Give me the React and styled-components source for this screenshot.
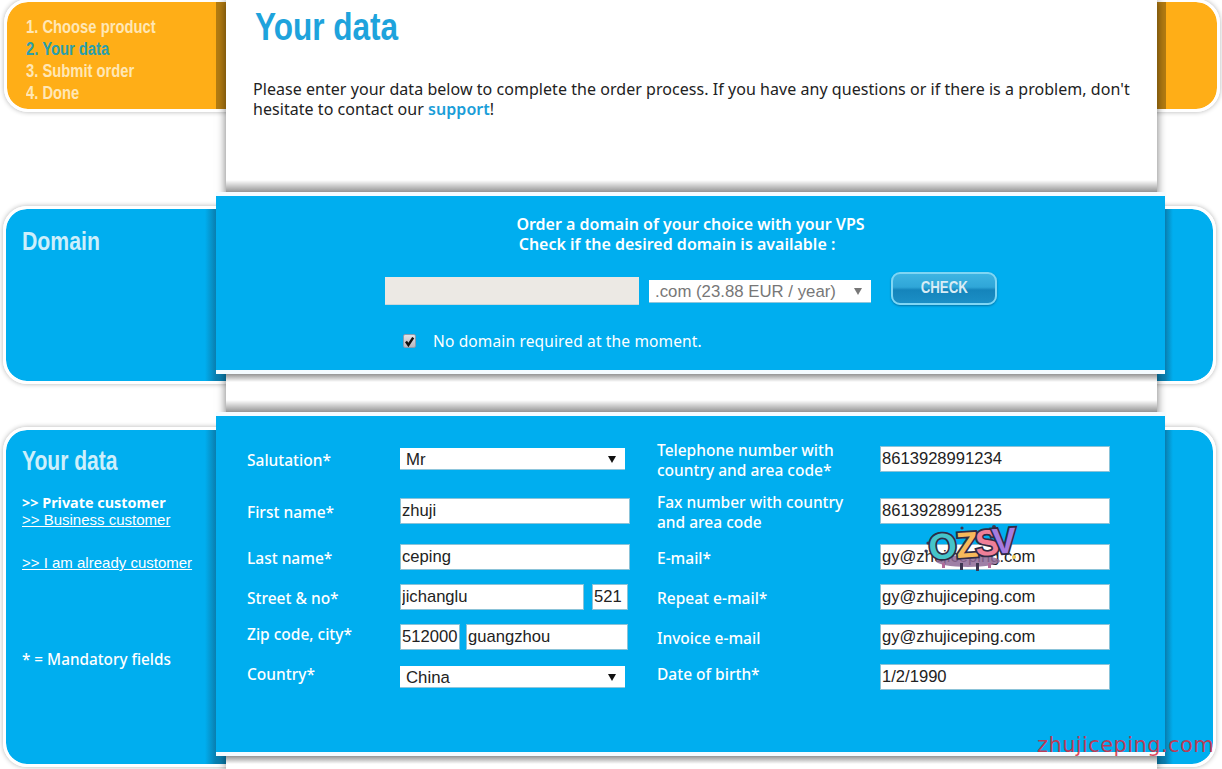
import React from "react";
import styled, { createGlobalStyle } from "styled-components";

const BLUE = "#00aeef";
const ORANGE = "#ffae17";
const BODY_FONT = '"Noto Sans", "Open Sans", sans-serif';
const ARIAL = '"Liberation Sans", Arial, sans-serif';

const GlobalStyle = createGlobalStyle`
  html, body {
    margin: 0;
    padding: 0;
    background: #fff;
    overflow: hidden;
  }
`;

//page grid: left tab, fold, white column, fold, right tab
const Page = styled.div`
  position: relative;
  width: 1222px;
  height: 769px;
  overflow: hidden;
  display: grid;
  grid-template-columns: 216px 10px 931px 8px 57px;
  grid-template-rows: 192px 220px 357px;
  font-family: ${BODY_FONT};
`;

const Band = styled.div`
  grid-column: 1 / -1;
  grid-row: ${(p) => p.$row};
  z-index: 1;
  align-self: start;
  box-sizing: border-box;
  height: ${(p) => p.$height}px;
  margin: ${(p) => p.$top}px ${(p) => 1222 - p.$right - 3}px 0 ${(p) => p.$left - 3}px;
  padding: ${(p) => p.$padTop}px 0 0 ${(p) => 22 - p.$left}px;
  border: 3px solid #fff;
  border-radius: 24px;
  box-shadow: 0 0 5px rgba(0, 0, 0, 0.3);
  background: linear-gradient(
    to right,
    ${BLUE} 0,
    ${BLUE} 199px,
    #0a7fb0 210px,
    #0a7fb0 1159px,
    ${BLUE} 1167px
  );
  background-clip: padding-box;
`;

const OrangeBand = styled(Band)`
  background: linear-gradient(
    to right,
    ${ORANGE} 0,
    ${ORANGE} 209px,
    #b37c12 209px,
    #b37c12 1159px,
    ${ORANGE} 1159px
  );
  background-clip: padding-box;
`;

const Condensed = styled.span`
  display: block;
  width: max-content;
  font-family: ${ARIAL};
  font-weight: 700;
  font-size: ${(p) => p.$size}px;
  line-height: ${(p) => p.$line}px;
  color: ${(p) => p.$color};
  transform: scaleX(${(p) => p.$sx});
  transform-origin: left center;
`;

const StepItem = styled(Condensed)`
  margin-left: 4px;
`;

const PageTitle = styled(Condensed)`
  margin: 0 0 0 2px;
`;

const ButtonText = styled(Condensed)`
  transform-origin: center;
`;

const Column = styled.div`
  grid-column: 3;
  grid-row: 1 / -1;
  z-index: 2;
  background: #fff;
  box-shadow: 0 0 9px rgba(0, 0, 0, 0.55);
  padding: 6px 27px 0 27px;
`;

const Intro = styled.p`
  margin: 31px 0 0;
  font-size: 16px;
  line-height: 20px;
  color: #222;
  letter-spacing: 0.045px;
`;

const SupportLink = styled.a`
  color: #1b9ed8;
  font-weight: 600;
`;

const Panel = styled.section`
  position: relative;
  grid-column: 1 / -1;
  grid-row: ${(p) => p.$row};
  z-index: 3;
  align-self: start;
  box-sizing: border-box;
  height: ${(p) => p.$height}px;
  margin: 0 57px 0 216px;
  border-top: 4px solid #f4fbff;
  border-bottom: 4px solid #f4fbff;
  background: ${BLUE};
  color: #fff;
  font-size: 15.5px;

  &::before,
  &::after {
    content: "";
    position: absolute;
    left: 10px;
    right: 8px;
  }
  &::before {
    top: -16px;
    height: 12px;
    background: linear-gradient(to bottom, rgba(0, 0, 0, 0), rgba(0, 0, 0, 0.42));
  }
  &::after {
    bottom: -12px;
    height: 8px;
    background: linear-gradient(to top, rgba(0, 0, 0, 0), rgba(0, 0, 0, 0.42));
  }
`;

const CenterLine = styled.div`
  text-align: center;
  font-size: 16px;
  font-weight: 600;
  line-height: 20px;
  margin-right: ${(p) => p.$shift || 0}px;
`;

const DomainHead = styled.div`
  padding-top: 18px;
`;

const DomainRow = styled.div`
  display: flex;
  align-items: center;
  margin-top: 23px;
  padding-left: 169px;
`;

const DomainInput = styled.input`
  box-sizing: border-box;
  width: 254px;
  height: 28px;
  border: 0;
  border-bottom: 1px solid #c9d8dc;
  background: #ece9e4;
  margin-right: 10px;
`;

const SelectBox = styled.div`
  position: relative;
  width: ${(p) => p.$width}px;
  height: ${(p) => p.$height}px;
  flex: none;

  &::after {
    content: "";
    position: absolute;
    right: ${(p) => p.$arrow}px;
    top: 50%;
    margin-top: -3px;
    border-left: 4px solid transparent;
    border-right: 4px solid transparent;
    border-top: 7px solid ${(p) => p.$arrowColor};
    pointer-events: none;
  }
`;

const Select = styled.select`
  appearance: none;
  display: block;
  box-sizing: border-box;
  width: 100%;
  height: 100%;
  border: 0;
  border-radius: 0;
  border-bottom: 1px solid #8fc6dc;
  background: #fff;
  padding: 1px 0 0 ${(p) => p.$pad}px;
  font-family: ${ARIAL};
  font-size: 16.8px;
  color: ${(p) => p.$color};
`;

const CheckButton = styled.button`
  box-sizing: border-box;
  width: 106px;
  height: 33px;
  margin: -6px 0 0 20px;
  padding: 0;
  border: 2px solid #7fd6f4;
  border-radius: 9px;
  background: linear-gradient(to bottom, #3eb4e2 0%, #2fa6d8 45%, #1484bb 55%, #1b8fc6 100%);
  box-shadow: 0 1px 2px rgba(0, 60, 100, 0.5);
  display: flex;
  justify-content: center;
  align-items: center;
`;

const CheckRow = styled.label`
  display: flex;
  align-items: center;
  margin: 26px 0 0 187px;
  line-height: 20px;
  letter-spacing: 0.15px;
`;

const CheckMark = styled.span`
  box-sizing: border-box;
  width: 13px;
  height: 14px;
  margin-right: 17px;
  border: 1px solid #8c9cb0;
  border-radius: 2px;
  background: linear-gradient(to bottom, #e2e2e6, #b8b8c0);
  display: flex;
  align-items: center;
  justify-content: center;
`;

const Form = styled.form`
  padding: 30px 0 0 31px;
`;

const FormRow = styled.div`
  display: grid;
  grid-template-columns: 153px 230px 27px 223px 230px;
  grid-template-rows: 26px;
  align-items: center;
  margin-top: ${(p) => p.$gap}px;
`;

const Label = styled.label`
  line-height: 20px;
  font-weight: 500;
  grid-column: ${(p) => p.$col};
  margin-top: ${(p) => p.$nudge ?? 2}px;
`;

const Controls = styled.div`
  display: flex;
  gap: ${(p) => p.$gap || 0}px;
  grid-column: ${(p) => p.$col};
`;

const TextInput = styled.input`
  box-sizing: border-box;
  width: ${(p) => p.$width}px;
  height: 26px;
  padding: 0 2px;
  border: 0;
  border-radius: 0;
  outline: 1px solid rgba(90, 170, 200, 0.7);
  outline-offset: -1px;
  background: #fff;
  font-family: ${ARIAL};
  font-size: 16.6px;
  color: #222;
`;

const SideNote = styled.div`
  width: 190px;
  font-size: ${(p) => p.$size}px;
  line-height: 17px;
  color: #fff;
  margin-top: ${(p) => p.$top}px;
  font-weight: ${(p) => (p.$bold ? 700 : 500)};
`;

const SideLink = styled.a`
  display: block;
  width: max-content;
  font-family: ${ARIAL};
  font-size: 15px;
  line-height: 17px;
  color: #fff;
  text-decoration: underline;
  margin-top: ${(p) => p.$top || 0}px;
`;

const Sticker = styled.svg`
  position: absolute;
  left: 708px;
  top: 107px;
  overflow: visible;
`;

const Watermark = styled.div`
  position: absolute;
  left: 1037px;
  top: 731px;
  z-index: 5;
  font-family: "DejaVu Sans", sans-serif;
  font-size: 21px;
  line-height: 28px;
  letter-spacing: 0.4px;
  color: rgba(220, 40, 60, 0.85);
`;

const steps = [
  { label: "1. Choose product" },
  { label: "2. Your data", active: true },
  { label: "3. Submit order" },
  { label: "4. Done" },
];

const formRows = [
  {
    gap: 0,
    left: "Salutation*",
    right: ["Telephone number with", "country and area code*"],
    rightValue: "8613928991234",
    select: "Mr",
  },
  {
    gap: 26,
    left: "First name*",
    right: ["Fax number with country", "and area code"],
    rightValue: "8613928991235",
    inputs: [{ value: "zhuji", width: 230 }],
  },
  {
    gap: 20,
    left: "Last name*",
    right: ["E-mail*"],
    rightValue: "gy@zhujiceping.com",
    inputs: [{ value: "ceping", width: 230 }],
  },
  {
    gap: 14,
    left: "Street & no*",
    right: ["Repeat e-mail*"],
    rightValue: "gy@zhujiceping.com",
    inputGap: 8,
    inputs: [
      { value: "jichanglu", width: 184 },
      { value: "521", width: 36 },
    ],
  },
  {
    gap: 14,
    left: "Zip code, city*",
    nudge: -6,
    right: ["Invoice e-mail"],
    rightValue: "gy@zhujiceping.com",
    inputGap: 6,
    inputs: [
      { value: "512000", width: 60 },
      { value: "guangzhou", width: 162 },
    ],
  },
  {
    gap: 14,
    left: "Country*",
    nudge: -6,
    right: ["Date of birth*"],
    rightNudge: -6,
    rightValue: "1/2/1990",
    select: "China",
  },
];

const stickerLetters = [
  { ch: "O", x: 6, y: 37, r: -6, fill: "#45c4c9" },
  { ch: "Z", x: 33, y: 35, r: -4, fill: "#f6b95b" },
  { ch: "S", x: 52, y: 33, r: -4, fill: "#ef7f98" },
  { ch: "V", x: 69, y: 31, r: -4, fill: "#a57be0" },
];

function App() {
  return (
    <Page>
      <GlobalStyle />

      <OrangeBand as="nav" $row={1} $top={-1} $left={7} $right={1217} $height={113} $padTop={14}>
        {steps.map((s) => (
          <StepItem key={s.label} $size={18} $line={22} $sx={0.82} $color={s.active ? "#2a9fad" : "#ffe7b5"}>
            {s.label}
          </StepItem>
        ))}
      </OrangeBand>

      <Band $row={2} $top={14} $left={6} $right={1213} $height={178} $padTop={17}>
        <Condensed $size={25} $line={30} $sx={0.85} $color="#cdeffb">Domain</Condensed>
      </Band>

      <Band $row={3} $top={15} $left={6} $right={1213} $height={340} $padTop={16}>
        <Condensed $size={27} $line={30} $sx={0.78} $color="#cdeffb">Your data</Condensed>
        <SideNote $top={18} $size={14.4} $bold>&gt;&gt; Private customer</SideNote>
        <SideLink>&gt;&gt; Business customer</SideLink>
        <SideLink $top={26}>&gt;&gt; I am already customer</SideLink>
        <SideNote $top={80} $size={15.3}>* = Mandatory fields</SideNote>
      </Band>

      <Column>
        <PageTitle as="h1" $size={38} $line={42} $sx={0.83} $color="#1ea3dc">
          Your data
        </PageTitle>
        <Intro>
          Please enter your data below to complete the order process. If you have any questions or if there is a problem, don't hesitate to contact our <SupportLink>support</SupportLink>!
        </Intro>
      </Column>

      <Panel $row={2} $height={182}>
        <DomainHead>
          <CenterLine>Order a domain of your choice with your VPS</CenterLine>
          <CenterLine $shift={27}>Check if the desired domain is available :</CenterLine>
        </DomainHead>
        <DomainRow>
          <DomainInput />
          <SelectBox $width={222} $height={23} $arrow={9} $arrowColor="#777">
            <Select $pad={6} $color="#777" defaultValue="com">
              <option value="com">.com (23.88 EUR / year)</option>
            </Select>
          </SelectBox>
          <CheckButton type="button">
            <ButtonText $size={17} $line={20} $sx={0.78} $color="#d8ecf5">CHECK</ButtonText>
          </CheckButton>
        </DomainRow>
        <CheckRow>
          <CheckMark>
            <svg width="11" height="11" viewBox="0 0 11 11">
              <path d="M2 5.5 L4.4 9 L9.2 1.6" fill="none" stroke="#111" strokeWidth="2.4" />
            </svg>
          </CheckMark>
          No domain required at the moment.
        </CheckRow>
      </Panel>

      <Panel $row={3} $height={344}>
        <Form>
          {formRows.map((row) => (
            <FormRow key={row.left} $gap={row.gap}>
              <Label $col={1} $nudge={row.nudge}>{row.left}</Label>
              <Controls $col={2} $gap={row.inputGap}>
                {row.select ? (
                  <SelectBox $width={225} $height={22} $arrow={9} $arrowColor="#111">
                    <Select $pad={6} $color="#222" defaultValue={row.select}>
                      <option>{row.select}</option>
                    </Select>
                  </SelectBox>
                ) : (
                  row.inputs.map((f) => (
                    <TextInput key={f.value} $width={f.width} defaultValue={f.value} />
                  ))
                )}
              </Controls>
              <Label $col={4} $nudge={row.rightNudge}>
                {row.right.map((line) => (
                  <div key={line}>{line}</div>
                ))}
              </Label>
              <Controls $col={5}>
                <TextInput $width={230} defaultValue={row.rightValue} />
              </Controls>
            </FormRow>
          ))}
        </Form>
        <Sticker width="100" height="48" viewBox="0 0 100 48">
          <ellipse cx="44" cy="38" rx="32" ry="6" fill="#8e6a96" opacity="0.85" />
          <rect x="18" y="40" width="3" height="5" fill="#b06a9a" />
          <rect x="36" y="40" width="3" height="7" fill="#3c3550" />
          <rect x="52" y="40" width="3" height="8" fill="#3c3550" />
          <rect x="64" y="40" width="3" height="5" fill="#b06a9a" />
          <circle cx="4" cy="20" r="1.6" fill="#3c3550" />
          <circle cx="2" cy="28" r="1.6" fill="#3c3550" />
          <circle cx="38" cy="5" r="1.6" fill="#3c3550" />
          <circle cx="70" cy="4" r="2" fill="#3c3550" />
          <circle cx="90" cy="34" r="2" fill="#e8c75a" />
          {stickerLetters.map((l) => (
            <text
              key={l.ch}
              x={l.x}
              y={l.y}
              transform={`rotate(${l.r} ${l.x} ${l.y})`}
              fontFamily='"Liberation Sans", sans-serif'
              fontWeight="700"
              fontSize="36"
              fill={l.fill}
              stroke="#2f2b45"
              strokeWidth="3.5"
              paintOrder="stroke"
            >
              {l.ch}
            </text>
          ))}
        </Sticker>
      </Panel>

      <Watermark>zhujiceping.com</Watermark>
    </Page>
  );
}

export default App;
